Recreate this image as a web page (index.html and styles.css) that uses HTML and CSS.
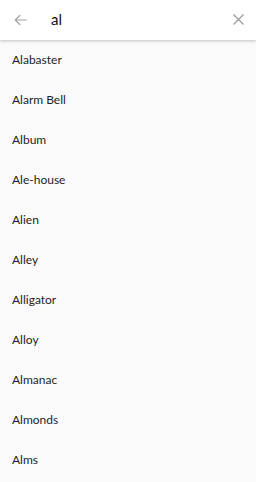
FILE: index.html
```html
<!DOCTYPE html>
<html>
<head>
<meta charset="utf-8">
<link rel="stylesheet" href="styles.css">
</head>
<body>
<div class="app">
  <header class="bar">
    <span class="icon back">
      <svg width="13" height="12" viewBox="0 0 13 12"><path d="M12.5 6H1.2M6.2 1L1.2 6l5 5" fill="none" stroke="#a0a0a0" stroke-width="1.1"/></svg>
    </span>
    <span class="query">al</span>
    <span class="icon close">
      <svg width="11" height="11" viewBox="0 0 11 11"><path d="M0.5 0.5l10 10M10.5 0.5l-10 10" fill="none" stroke="#9a9a9a" stroke-width="1.2"/></svg>
    </span>
  </header>
  <ul class="list">
    <li>Alabaster</li>
    <li>Alarm Bell</li>
    <li>Album</li>
    <li>Ale-house</li>
    <li>Alien</li>
    <li>Alley</li>
    <li>Alligator</li>
    <li>Alloy</li>
    <li>Almanac</li>
    <li>Almonds</li>
    <li>Alms</li>
  </ul>
</div>
</body>
</html>
```
FILE: styles.css
```css
html, body { margin: 0; padding: 0; }
body { width: 256px; height: 482px; overflow: hidden; background: #fafafa; font-family: "Lato", "Noto Sans", sans-serif; color: #212121; }
.app { display: flex; flex-direction: column; }
.bar { height: 40px; background: #fff; display: flex; align-items: center; box-shadow: 0 1px 3px rgba(0,0,0,0.22); position: relative; z-index: 1; }
.icon { display: flex; align-items: center; justify-content: center; }
.back { width: 13px; margin-left: 14px; margin-top: -1px; }
.query { flex: 1; margin-left: 24px; font-size: 15px; color: #111; margin-top: -2px; }
.close { width: 11px; margin-right: 12px; margin-top: -1px; }
.list { list-style: none; margin: 0; padding: 0; }
.list li { height: 40px; display: flex; align-items: center; padding-left: 12px; font-size: 12px; color: #1e1e1e; padding-bottom: 1px; box-sizing: border-box; }
```
